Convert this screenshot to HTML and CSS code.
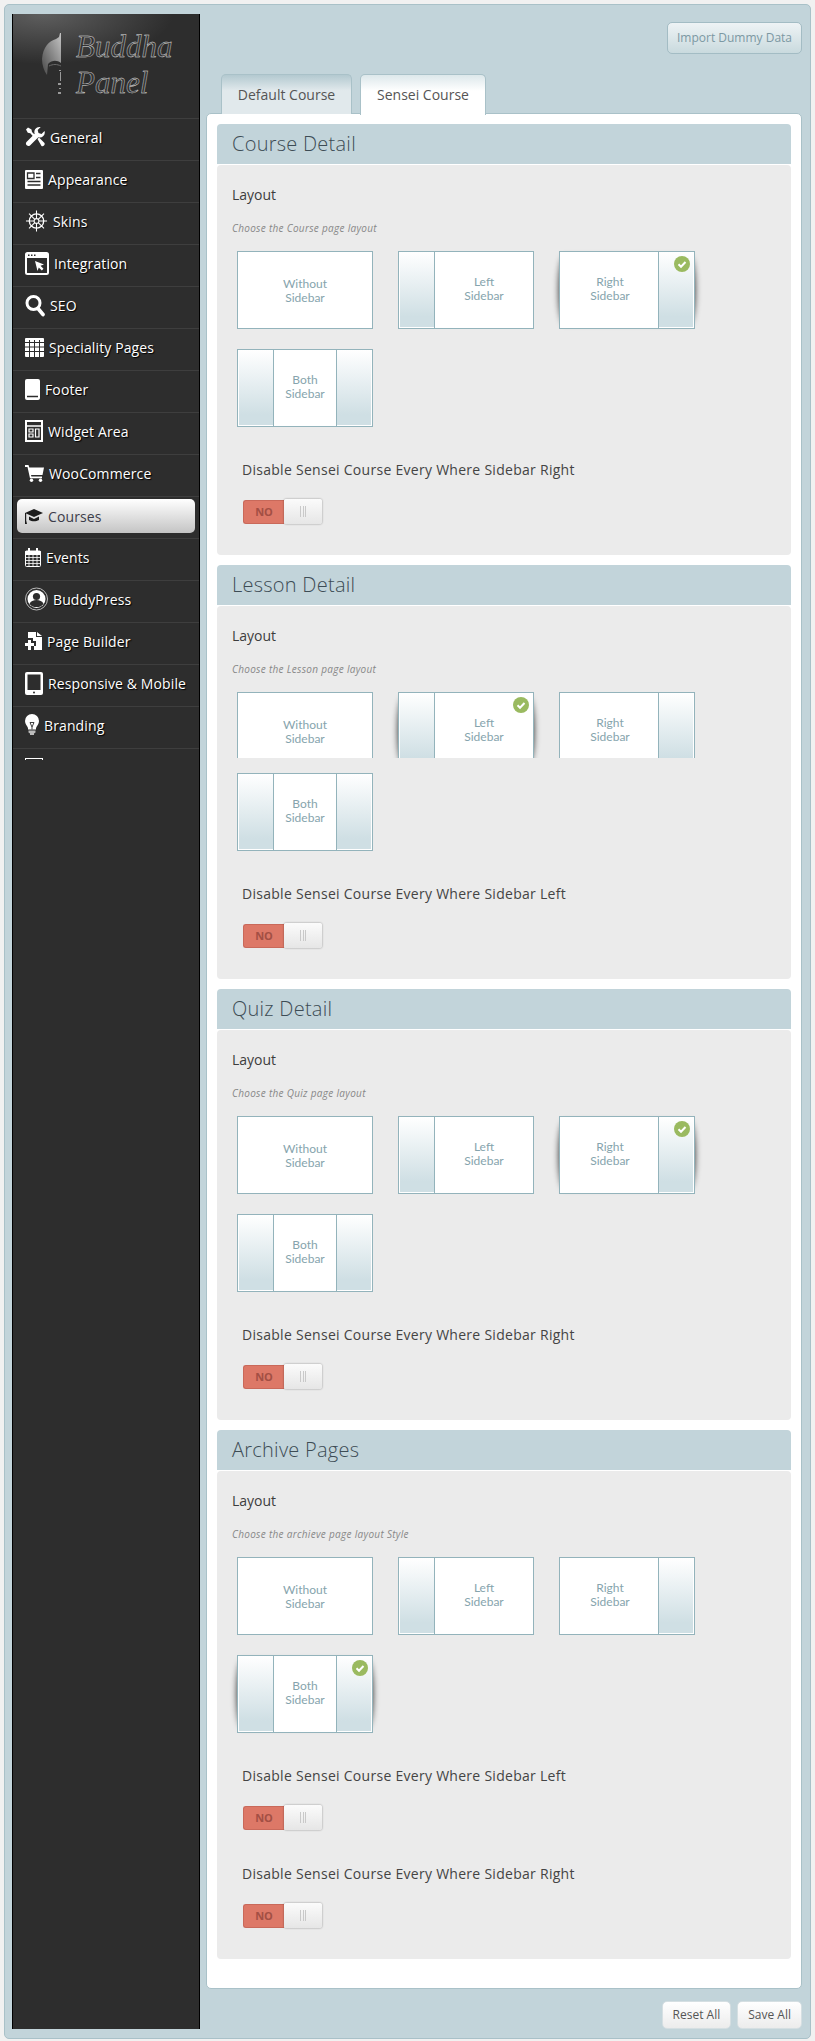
FILE: index.html
```html
<!DOCTYPE html>
<html lang="en">

<head>
    <meta charset="UTF-8">
    <meta name="viewport" content="width=device-width, initial-scale=1.0">
    <title>Buddha Panel</title>
    <link rel="stylesheet" href="styles.css">
</head>

<body>
    <div class="wrap">
        <div class="sidebar">
            <div class="logo">
                <svg class="logo-head" width="21" height="62" viewBox="0 0 21 62">
                    <defs>
                        <linearGradient id="headfill" x1="1" y1="0" x2="0" y2="1">
                            <stop offset="0" stop-color="#c4c4c4" />
                            <stop offset="0.55" stop-color="#808080" />
                            <stop offset="1" stop-color="#484848" />
                        </linearGradient>
                    </defs>
                    <path fill="url(#headfill)" d="M19 0h1v30c-4-3-9-3-13 1l-1 11c-3-4-5-10-5-16C2 14 8 8 15 6l3-2z" />
                    <path fill="none" stroke="#6a6a6a" d="M8 33c4-2 8-2 12 0" />
                    <path fill="#9a9a9a" d="M18 37h2v1h-2zM19 39h1v9h-1zM17 50h3v2h-3zM18 55h2v1h-2zM17 59h3v2h-3z" />
                </svg>
                <div class="logo-text">Buddha<br>Panel</div>
            </div>
            <ul class="nav">
                <li><a href="#">
                        <svg width="20" height="22" viewBox="0 0 20 20" fill="#fff"><path d="M14.500 0a5 5 0 0 0-4.800 6.800L1.500 15a2.500 2.500 0 0 0 3.500 3.500l8.300-8.200A5 5 0 0 0 19.500 4l-3 3-3-1-.8-3 3-3z" /><path d="M1 2.500 3 .5l3.500 2 .5 2.500 4.500 4.500-1.700 1.700L5.300 6.200 2.800 5.700zM12.500 12l1.500-1.500 5.500 5.500a2.300 2.300 0 0 1-3 3z" /></svg>
                        General</a></li>
                <li><a href="#">
                        <svg width="18" height="19" viewBox="0 0 18 19"><rect width="18" height="19" rx="1" fill="#fff" /><path fill="none" stroke="#2d2d2d" stroke-width="1.300" d="M2.500 3h6.500v5.500H2.500zM11 3.500h4.500M11 7.500h4.500M2.500 11.500h13M2.500 15h13" /></svg>
                        Appearance</a></li>
                <li><a href="#">
                        <svg width="23" height="24" viewBox="0 0 24 24" fill="none" stroke="#fff" stroke-width="1.100"><circle cx="12" cy="12" r="7.500" stroke-width="1.400" /><circle cx="12" cy="12" r="2.500" /><path d="M12 1v8.500M12 14.500V23M1 12h8.500M14.500 12H23M4.200 4.200l6 6M13.800 13.800l6 6M19.800 4.200l-6 6M10.200 13.800l-6 6" /></svg>
                        Skins</a></li>
                <li><a href="#">
                        <svg width="24" height="23" viewBox="0 0 24 23"><rect x="1" y="1" width="22" height="21" rx="1.500" fill="none" stroke="#fff" stroke-width="2" /><rect x="1" y="1" width="22" height="5" fill="#fff" /><path fill="#2d2d2d" d="M3 2.500h1.500V4H3zM6 2.500h1.500V4H6zM9 2.500h1.500V4H9z" /><path fill="#fff" d="M10 9l9 3.500-3.500 1.300 3 3-1.700 1.700-3-3L12.500 19z" /></svg>
                        Integration</a></li>
                <li><a href="#">
                        <svg width="20" height="23" viewBox="0 0 20 23" fill="none" stroke="#fff"><circle cx="8.500" cy="9" r="6.500" stroke-width="3" /><path d="M13 14.500l5 6" stroke-width="3.600" stroke-linecap="round" /></svg>
                        SEO</a></li>
                <li><a href="#">
                        <svg width="19" height="19" viewBox="0 0 19 19"><rect width="19" height="19" rx="1" fill="#fff" /><path stroke="#2d2d2d" d="M0 4.500h19M0 9h19M0 13.500h19M4.500 2v17M9.500 2v17M14.500 2v17" /></svg>
                        Speciality Pages</a></li>
                <li><a href="#">
                        <svg width="15" height="21" viewBox="0 0 15 21"><rect width="15" height="21" rx="2" fill="#fff" /><path stroke="#2d2d2d" stroke-width="1.500" d="M2 17.500h11" /></svg>
                        Footer</a></li>
                <li><a href="#">
                        <svg width="18" height="22" viewBox="0 0 18 22" fill="none" stroke="#fff"><rect x="1" y="1" width="16" height="20" stroke-width="2" /><path stroke-width="1.500" d="M1 6h16" /><path stroke-width="1.200" d="M4 9h4v3H4zM4 14h4v3H4zM10.500 9h3.500v8h-3.500z" /></svg>
                        Widget Area</a></li>
                <li><a href="#">
                        <svg width="19" height="17" viewBox="0 0 19 17" fill="#fff"><path d="M0 0h3.500l.8 2.500H19l-1.500 7.500H6l.4 1.500H17v1.800H5L2.500 2H0z" /><circle cx="6.500" cy="15.300" r="1.700" /><circle cx="15.500" cy="15.300" r="1.700" /></svg>
                        WooCommerce</a></li>
                <li class="active"><a href="#">
                        <svg width="18" height="15" viewBox="0 0 18 15" fill="#1c1c1c"><path d="M9 0l9 4-9 4-9-4z" /><path d="M4 7.500 9 10l5-2.500V11c-3 1.800-7 1.800-10 0z" /><path d="M0 4h1.200v7.500L2 15H0z" /></svg>
                        Courses</a></li>
                <li><a href="#">
                        <svg width="16" height="19" viewBox="0 0 16 19" fill="none" stroke="#fff"><rect x=".5" y="3" width="15" height="15.500" rx="1" /><path fill="#fff" d="M.5 3.500h15v3H.5z" /><path stroke-width=".8" d="M.5 9.500h15M.5 12.500h15M.5 15.500h15M4 7v11M8 7v11M12 7v11" /><path stroke-width="2" d="M4 0v3.500M12 0v3.500" /></svg>
                        Events</a></li>
                <li><a href="#">
                        <svg width="23" height="24" viewBox="0 0 23 24"><circle cx="11.500" cy="12" r="11" fill="none" stroke="#bbb" /><circle cx="11.500" cy="12" r="9" fill="#fff" /><circle cx="11.500" cy="9.500" r="3.600" fill="#2d2d2d" /><path fill="#2d2d2d" d="M4.500 17c1-3 4-4 7-4s6 1 7 4c-2 2.500-4 3-7 3s-5-.5-7-3z" /></svg>
                        BuddyPress</a></li>
                <li><a href="#">
                        <svg width="17" height="18" viewBox="0 0 17 18" fill="#fff"><path d="M3 0h8v5h6v13H9v-4h2V9H8V6H3z" /><path d="M12 0l5 4h-5z" /><path d="M3 8h3v3h3v3H6v4H3v-4H0v-3h3z" /></svg>
                        Page Builder</a></li>
                <li><a href="#">
                        <svg width="18" height="23" viewBox="0 0 18 23"><rect width="18" height="23" rx="2" fill="#fff" /><rect x="2.500" y="2.500" width="13" height="15.500" fill="#2d2d2d" /><circle cx="9" cy="20.500" r="1" fill="#2d2d2d" /></svg>
                        Responsive &amp; Mobile</a></li>
                <li><a href="#">
                        <svg width="14" height="22" viewBox="0 0 14 22"><path fill="#fff" d="M7 0a7 7 0 0 0-7 7c0 3 2 4.500 3 7v1.500h8V14c1-2.500 3-4 3-7a7 7 0 0 0-7-7z" /><path fill="#bbb" d="M3.500 16.500h7v2l-1.500 1v1.500H5V19.500l-1.500-1z" /><path fill="none" stroke="#2d2d2d" stroke-width=".9" d="M5 8.500h4L7 13zM7 13v2.500" /></svg>
                        Branding</a></li>
                <li><a href="#">
                        <svg width="18" height="18" viewBox="0 0 18 18"><rect width="18" height="18" rx="1" fill="none" stroke="#fff" stroke-width="2" /></svg>
                    </a></li>
            </ul>
        </div>

        <div class="main">
            <div class="top-bar">
                <a class="btn-import" href="#">Import Dummy Data</a>
            </div>
            <div class="tabs">
                <a class="tab" href="#">Default Course</a>
                <a class="tab tab-on" href="#">Sensei Course</a>
            </div>

            <div class="card">
                <div class="section">
                    <h3 class="section-head">Course Detail</h3>
                    <div class="section-body">
                        <div class="field-title">Layout</div>
                        <div class="field-desc">Choose the Course page layout</div>
                        <div class="tile-row">
                            <div class="tile"><span class="tile-text plain">Without<br>Sidebar</span></div>
                            <div class="tile"><span class="side"></span><span class="tile-text">Left<br>Sidebar</span></div>
                            <div class="tile on"><span class="tile-text rt">Right<br>Sidebar</span><span class="side right"></span><svg class="check" viewBox="0 0 16 16"><path d="M4.500 8.200 7 10.700l4.500-4.700" /></svg></div>
                        </div>
                        <div class="tile-row">
                            <div class="tile"><span class="side"></span><span class="tile-text">Both<br>Sidebar</span><span class="side right"></span></div>
                        </div>
                        <div class="option">
                            <div class="option-label">Disable Sensei Course Every Where Sidebar Right</div>
                            <div class="toggle"><span class="toggle-no">NO</span><span class="toggle-knob"></span></div>
                        </div>
                    </div>
                </div>

                <div class="section">
                    <h3 class="section-head">Lesson Detail</h3>
                    <div class="section-body">
                        <div class="field-title">Layout</div>
                        <div class="field-desc">Choose the Lesson page layout</div>
                        <div class="tile-row cut">
                            <div class="tile"><span class="tile-text plain">Without<br>Sidebar</span></div>
                            <div class="tile on"><span class="side"></span><span class="tile-text">Left<br>Sidebar</span><svg class="check" viewBox="0 0 16 16"><path d="M4.500 8.200 7 10.700l4.500-4.700" /></svg></div>
                            <div class="tile"><span class="tile-text rt">Right<br>Sidebar</span><span class="side right"></span></div>
                        </div>
                        <div class="tile-row">
                            <div class="tile"><span class="side"></span><span class="tile-text">Both<br>Sidebar</span><span class="side right"></span></div>
                        </div>
                        <div class="option">
                            <div class="option-label">Disable Sensei Course Every Where Sidebar Left</div>
                            <div class="toggle"><span class="toggle-no">NO</span><span class="toggle-knob"></span></div>
                        </div>
                    </div>
                </div>

                <div class="section">
                    <h3 class="section-head">Quiz Detail</h3>
                    <div class="section-body">
                        <div class="field-title">Layout</div>
                        <div class="field-desc">Choose the Quiz page layout</div>
                        <div class="tile-row">
                            <div class="tile"><span class="tile-text plain">Without<br>Sidebar</span></div>
                            <div class="tile"><span class="side"></span><span class="tile-text">Left<br>Sidebar</span></div>
                            <div class="tile on"><span class="tile-text rt">Right<br>Sidebar</span><span class="side right"></span><svg class="check" viewBox="0 0 16 16"><path d="M4.500 8.200 7 10.700l4.500-4.700" /></svg></div>
                        </div>
                        <div class="tile-row">
                            <div class="tile"><span class="side"></span><span class="tile-text">Both<br>Sidebar</span><span class="side right"></span></div>
                        </div>
                        <div class="option">
                            <div class="option-label">Disable Sensei Course Every Where Sidebar Right</div>
                            <div class="toggle"><span class="toggle-no">NO</span><span class="toggle-knob"></span></div>
                        </div>
                    </div>
                </div>

                <div class="section">
                    <h3 class="section-head">Archive Pages</h3>
                    <div class="section-body">
                        <div class="field-title">Layout</div>
                        <div class="field-desc">Choose the archieve page layout Style</div>
                        <div class="tile-row">
                            <div class="tile"><span class="tile-text plain">Without<br>Sidebar</span></div>
                            <div class="tile"><span class="side"></span><span class="tile-text">Left<br>Sidebar</span></div>
                            <div class="tile"><span class="tile-text rt">Right<br>Sidebar</span><span class="side right"></span></div>
                        </div>
                        <div class="tile-row">
                            <div class="tile on"><span class="side"></span><span class="tile-text">Both<br>Sidebar</span><span class="side right"></span><svg class="check" viewBox="0 0 16 16"><path d="M4.500 8.200 7 10.700l4.500-4.700" /></svg></div>
                        </div>
                        <div class="option">
                            <div class="option-label">Disable Sensei Course Every Where Sidebar Left</div>
                            <div class="toggle"><span class="toggle-no">NO</span><span class="toggle-knob"></span></div>
                        </div>
                        <div class="option">
                            <div class="option-label">Disable Sensei Course Every Where Sidebar Right</div>
                            <div class="toggle"><span class="toggle-no">NO</span><span class="toggle-knob"></span></div>
                        </div>
                    </div>
                </div>
            </div>

            <div class="footer-bar">
                <a class="btn" href="#">Reset All</a>
                <a class="btn" href="#">Save All</a>
            </div>
        </div>
    </div>
</body>

</html>
```

FILE: styles.css
```css
html,
body {
    margin: 0;
    padding: 0;
}

body {
    font-family: "Open Sans", Arial, sans-serif;
    background-color: #f1f1f1;
    color: #444;
}

a {
    text-decoration: none;
    color: inherit;
}

.wrap {
    display: flex;
    box-sizing: border-box;
    height: 2035px;
    margin: 4px 4px 2px;
    padding: 9px 8px 9px 7px;
    background: #c2d4da;
    border: 1px solid #a9c1c8;
    border-radius: 5px;
}

/* sidebar */
.sidebar {
    box-sizing: border-box;
    width: 188px;
    flex: none;
    background: #2d2d2d;
    border-left: 1px solid #000;
    border-right: 1px solid #000;
}

.logo {
    position: relative;
    height: 104px;
    background: radial-gradient(ellipse 130px 50px at 30px 0, #5e5e5e, #2d2d2d);
}

.logo-head {
    position: absolute;
    left: 28px;
    top: 19px;
}

.logo-text {
    position: absolute;
    left: 63px;
    top: 15px;
    font-family: "Liberation Serif", serif;
    font-style: italic;
    font-size: 31px;
    line-height: 36px;
    color: #333;
    -webkit-text-stroke: 0.4px #e4e4e4;
}

.nav {
    list-style: none;
    margin: 0;
    padding: 0;
    height: 642px;
    overflow: hidden;
}

.nav li {
    box-sizing: border-box;
    height: 42px;
    border-top: 1px solid #3e3e3e;
    padding: 0 4px;
}

.nav li a {
    display: flex;
    align-items: center;
    gap: 5px;
    height: 38px;
    padding: 0 0 2px 8px;
    box-sizing: border-box;
    font-size: 14px;
    letter-spacing: 0.12px;
    color: #fff;
    text-shadow: 1px 1px 1px #000;
    white-space: nowrap;
}

.nav li.active a {
    position: relative;
    top: 2px;
    height: 34px;
    padding-bottom: 0;
    background: linear-gradient(#fff, #c4c4c4);
    border-radius: 5px;
    color: #3c3c4a;
    text-shadow: none;
}

.nav svg {
    flex: none;
}

/* main column */
.main {
    flex: 1;
    min-width: 0;
    margin-left: 6px;
    padding-top: 8px;
}

.top-bar {
    display: flex;
    justify-content: flex-end;
}

.btn-import {
    box-sizing: border-box;
    width: 135px;
    height: 32px;
    line-height: 30px;
    text-align: center;
    font-size: 12px;
    color: #7c98a3;
    background: linear-gradient(#eef3f5, #c9dade);
    border: 1px solid #a3bcc4;
    border-radius: 5px;
}

.tabs {
    position: relative;
    display: flex;
    gap: 8px;
    height: 40px;
    margin: 20px 0 -1px;
    padding-left: 15px;
}

.tab {
    box-sizing: border-box;
    width: 131px;
    height: 40px;
    line-height: 40px;
    text-align: center;
    font-size: 14px;
    color: #555;
    background: linear-gradient(#b3c9d0, #e1e9ec 40%);
    border: 1px solid #a9c1c8;
    border-bottom: 0;
    border-radius: 5px 5px 0 0;
}

.tab-on {
    width: 126px;
    height: 41px;
    background: linear-gradient(#dde8eb, #fff 40%);
}

.card {
    box-sizing: border-box;
    height: 1876px;
    padding: 10px 10px 29px;
    background: #fff;
    border: 1px solid #a9c1c8;
    border-radius: 5px;
}

.section {
    margin-bottom: 10px;
}

.section-head {
    margin: 0 0 1px;
    height: 40px;
    line-height: 40px;
    padding-left: 15px;
    font-size: 20px;
    font-weight: 300;
    letter-spacing: 0.25px;
    color: #3d4c55;
    background: #c2d4da;
    border-radius: 4px 4px 0 0;
}

.section-body {
    isolation: isolate;
    padding: 20px 15px 30px;
    background: #ebebeb;
    border-radius: 4px;
}

.field-title {
    font-size: 14px;
    line-height: 20px;
    color: #3d3d3d;
}

.field-desc {
    margin: 15px 0;
    font-size: 10px;
    line-height: 16px;
    letter-spacing: 0.3px;
    font-style: italic;
    color: #888;
}

.tile-row {
    display: flex;
    gap: 25px;
    margin: 0 -5px 20px 5px;
}

.tile-row:nth-last-child(2) {
    margin-bottom: 0;
}

/* the lesson row is cut off short in the original */
.tile-row.cut {
    height: 66px;
    overflow: hidden;
    margin-bottom: 15px;
}

.tile {
    position: relative;
    display: flex;
    box-sizing: border-box;
    flex: none;
    width: 136px;
    height: 78px;
    background: #fff;
    border: 1px solid #93b3bb;
}

.tile.on::before {
    content: "";
    position: absolute;
    z-index: -1;
    top: 6px;
    bottom: 6px;
    left: 0;
    right: 0;
    border-radius: 8px / 50px;
    box-shadow: 0 0 6px 1px rgba(0, 0, 0, 0.8);
}

.side {
    flex: none;
    box-sizing: border-box;
    width: 36px;
    border-right: 1px solid #93b3bb;
    box-shadow: inset 1px 0 0 #fff, inset 0 -1px 0 #fff;
    background: linear-gradient(#fff, #cfdfe4 85%);
}

.side.right {
    border-right: 0;
    border-left: 1px solid #93b3bb;
    box-shadow: inset -1px 0 0 #fff, inset 0 -1px 0 #fff;
}

.tile-text {
    flex: 1;
    display: flex;
    align-items: center;
    justify-content: center;
    box-sizing: border-box;
    padding-bottom: 3px;
    text-align: center;
    font-family: Lato, sans-serif;
    font-size: 12px;
    line-height: 14px;
    color: #86a4ad;
}

.tile-text.plain {
    padding: 1px 0 0;
}

.tile-text.rt {
    padding-left: 2px;
}

.check {
    position: absolute;
    top: 4px;
    right: 4px;
    width: 16px;
    height: 16px;
    background: #9aba60;
    border-radius: 50%;
    fill: none;
    stroke: #fff;
    stroke-width: 2;
}

.option {
    margin: 33px 0 0 10px;
}

.option-label {
    font-size: 14px;
    line-height: 20px;
    letter-spacing: 0.28px;
    color: #444;
}

.toggle {
    display: flex;
    height: 25px;
    margin: 20px 0 0 1px;
}

.toggle-no {
    box-sizing: border-box;
    width: 41px;
    height: 24px;
    line-height: 22px;
    text-align: center;
    font-size: 11px;
    font-weight: 700;
    color: #a34f44;
    background: #dd7867;
    border: 1px solid #c9695a;
    border-right: 0;
    border-radius: 3px 0 0 3px;
}

.toggle-knob {
    box-sizing: border-box;
    width: 38px;
    height: 25px;
    margin-top: -1px;
    background:
        linear-gradient(#c9c9c9, #c9c9c9) 16px 7px / 1px 11px no-repeat,
        linear-gradient(#c9c9c9, #c9c9c9) 18.5px 7px / 1px 11px no-repeat,
        linear-gradient(#c9c9c9, #c9c9c9) 21px 7px / 1px 11px no-repeat,
        linear-gradient(#fbfbfb, #e6e6e6);
    border-radius: 2px;
    box-shadow: 0 0 2px rgba(0, 0, 0, 0.45);
}

.footer-bar {
    display: flex;
    justify-content: flex-end;
    gap: 6px;
    margin-top: 12px;
}

.btn {
    box-sizing: border-box;
    height: 28px;
    line-height: 26px;
    padding: 0 10px;
    font-size: 12px;
    color: #555;
    background: linear-gradient(#fff, #ececec);
    border: 1px solid #d5dfe2;
    border-radius: 5px;
}
```
